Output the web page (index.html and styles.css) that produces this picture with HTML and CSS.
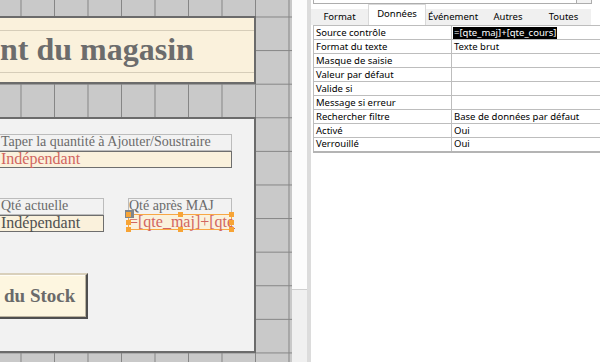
FILE: index.html
```html
<!DOCTYPE html>
<html lang="fr">
<head>
    <meta charset="UTF-8">
    <title>Formulaire - Mode Création</title>
    <link rel="stylesheet" href="styles.css">
</head>
<body>
    <div class="app">
        <!-- zone de création du formulaire -->
        <div class="design">
            <div class="title-box">
                <div class="title-inner">nt du magasin</div>
            </div>

            <div class="form-body">
                <div class="field wide">
                    <div class="lbl">Taper la quantité à Ajouter/Soustraire</div>
                    <div class="txt red">Indépendant</div>
                </div>

                <div class="qty-row">
                    <div class="field short">
                        <div class="lbl">Qté actuelle</div>
                        <div class="txt dark">Indépendant</div>
                    </div>
                    <div class="field calc">
                        <div class="lbl">Qté après MAJ</div>
                        <div class="txt red selected">
                            =[qte_maj]+[qte_cours]
                            <span class="handle move"></span>
                            <span class="handle h-tl"></span>
                            <span class="handle h-tm"></span>
                            <span class="handle h-tr"></span>
                            <span class="handle h-ml"></span>
                            <span class="handle h-mr"></span>
                            <span class="handle h-bl"></span>
                            <span class="handle h-bm"></span>
                            <span class="handle h-br"></span>
                        </div>
                    </div>
                </div>

                <button class="stock-btn">du Stock</button>
            </div>
        </div>

        <div class="splitter">
            <div class="splitter-low"></div>
        </div>

        <!-- feuille de propriétés -->
        <div class="props">
            <div class="obj-combo"><span class="combo-btn"></span></div>
            <div class="tabs">
                <div class="tab t-format">Format</div>
                <div class="tab t-data active">Données</div>
                <div class="tab t-event">Événement</div>
                <div class="tab t-other">Autres</div>
                <div class="tab t-all">Toutes</div>
            </div>
            <table class="prop-grid">
                <tr><td>Source contrôle</td><td><span class="sel">=[qte_maj]+[qte_cours]</span></td></tr>
                <tr><td>Format du texte</td><td>Texte brut</td></tr>
                <tr><td>Masque de saisie</td><td></td></tr>
                <tr><td>Valeur par défaut</td><td></td></tr>
                <tr><td>Valide si</td><td></td></tr>
                <tr><td>Message si erreur</td><td></td></tr>
                <tr><td>Rechercher filtre</td><td>Base de données par défaut</td></tr>
                <tr><td>Activé</td><td>Oui</td></tr>
                <tr><td>Verrouillé</td><td>Oui</td></tr>
            </table>
        </div>
    </div>
</body>
</html>
```

FILE: styles.css
```css
body {
    margin: 0;
    overflow: hidden;
    background: #fff;
}

.app {
    display: flex;
    width: 600px;
    height: 362px;
    overflow: hidden;
}

/* ---- design view ---- */
.design {
    width: 292px;
    flex-shrink: 0;
    overflow: hidden;
    background-color: #c9c9c9;
    background-image:
        linear-gradient(90deg, #858585 1px, transparent 1px),
        linear-gradient(#858585 1px, transparent 1px);
    background-size: 33.5px 33.6px;
    background-position: 20.5px 16.5px;
    font-family: "Liberation Serif", "Times New Roman", serif;
}

.title-box {
    box-sizing: border-box;
    width: 266px;
    height: 68px;
    margin: 16px 0 0 -10px;
    border: 2px solid #6b6b6b;
    background: #faf1dc;
}

.title-inner {
    box-sizing: border-box;
    height: 43px;
    margin-top: 12px;
    padding-left: 8px;
    border-top: 1px solid #d6cdb9;
    border-bottom: 1px solid #d6cdb9;
    font-size: 32px;
    font-weight: bold;
    line-height: 37px;
    color: #6c6c6c;
    white-space: nowrap;
}

.form-body {
    box-sizing: border-box;
    width: 266px;
    height: 236px;
    margin: 33px 0 0 -10px;
    padding: 15px 0 0 2px;
    border: 2px solid #6b6b6b;
    background: #f2f2f2;
}

.field {
    display: flex;
    flex-direction: column;
}

.field.wide { width: 238px; }
.field.short { width: 110px; }
.field.calc { width: 104px; }

.lbl {
    box-sizing: border-box;
    height: 17px;
    padding-left: 6px;
    border: 1px solid #bcbcbc;
    font-size: 14px;
    line-height: 13px;
    color: #6a6a6a;
    white-space: nowrap;
    overflow: hidden;
}

.calc .lbl { padding-left: 0; }

.txt {
    box-sizing: border-box;
    height: 17px;
    padding-left: 6px;
    border: 1px solid #6e6e6e;
    background: #faf1dc;
    font-size: 16px;
    line-height: 13px;
    white-space: nowrap;
}

.txt.red { color: #d2655f; }
.txt.dark { color: #505050; }

.txt.selected {
    position: relative;
    height: 16px;
    margin-top: -1px;
    padding-left: 0;
    border-color: #f8a744;
    clip-path: inset(-6px -3px -3px -4px);
}

.qty-row {
    display: flex;
    gap: 24px;
    margin-top: 30px;
}

.handle {
    position: absolute;
    width: 5px;
    height: 5px;
    background: #f7a436;
}

.handle.move { left: -4px; top: -5px; width: 9px; height: 8px; background: #7f858d; }
.h-tl { left: -3px; top: -3px; }
.h-tm { left: 49px; top: -3px; }
.h-tr { right: -3px; top: -3px; }
.h-ml { left: -3px; top: 5px; }
.h-mr { right: -3px; top: 5px; }
.h-bl { left: -3px; bottom: -3px; }
.h-bm { left: 49px; bottom: -3px; }
.h-br { right: -3px; bottom: -3px; }

.stock-btn {
    display: block;
    box-sizing: border-box;
    width: 94px;
    height: 46px;
    margin-top: 41px;
    padding: 0 0 0 8px;
    border: 2px solid;
    border-color: #d9d0bb #4f4f4f #4f4f4f #d9d0bb;
    box-shadow: inset -1px -1px 0 #bbb39f, inset 1px 1px 0 #fffdf6;
    background: #fdf6e0;
    font-family: "Liberation Serif", "Times New Roman", serif;
    font-size: 19px;
    font-weight: bold;
    line-height: 40px;
    color: #6a6a6a;
    text-align: left;
    white-space: nowrap;
}

/* ---- splitter ---- */
.splitter {
    width: 15px;
    flex-shrink: 0;
    display: flex;
    flex-direction: column;
    justify-content: flex-end;
    background: #fcfcfc;
}

.splitter-low {
    height: 72px;
    border-top: 1px solid #cfcfcf;
    background: #f0f0f0;
}

/* ---- property sheet ---- */
.props {
    flex: 1;
    min-width: 0;
    border-left: 4px solid #dcdcdc;
    background: #fff;
    font-family: "Noto Sans", "Open Sans", sans-serif;
    font-size: 9.5px;
    color: #000;
}

.obj-combo {
    display: flex;
    justify-content: flex-end;
    height: 3px;
    margin: 0 8px 0 2px;
    border: 1px solid #adadad;
    border-top: none;
}

.combo-btn {
    width: 14px;
    border-left: 1px solid #adadad;
    background: #f2f2f2;
}

.tabs {
    display: flex;
    align-items: flex-end;
    height: 21px;
}

.tab {
    box-sizing: border-box;
    height: 16px;
    background: #f0f0f0;
    text-align: center;
    line-height: 16px;
}

.t-format { width: 57px; }
.t-data { width: 58px; }
.t-event { width: 54px; }
.t-other { width: 56px; }
.t-all { width: 55px; }

.tab.active {
    height: 21px;
    padding-top: 2px;
    border: 1px solid #d9d9d9;
    border-bottom: none;
    background: #fff;
    line-height: 14px;
}

.prop-grid {
    width: 300px;
    margin-left: 2px;
    border-collapse: collapse;
    border-bottom: 2px solid #b4b4b4;
}

.prop-grid td {
    box-sizing: border-box;
    height: 14px;
    padding: 0 0 0 2px;
    border: 1px solid #bdbdbd;
    line-height: 12px;
    white-space: nowrap;
}

.prop-grid td:first-child {
    width: 138px;
}

.sel {
    display: inline-block;
    padding: 0 1px;
    margin-left: -1px;
    background: #000;
    color: #fff;
}
```
